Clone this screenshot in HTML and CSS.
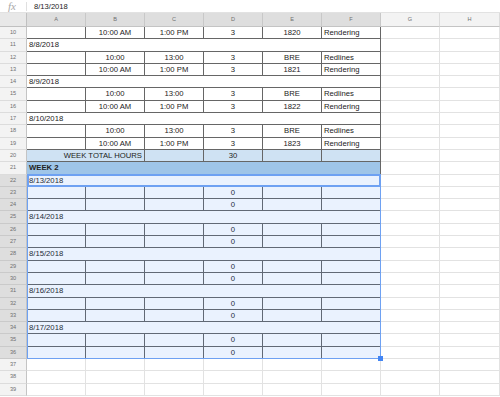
FILE: index.html
```html
<!DOCTYPE html>
<html>

<head>
  <meta charset="UTF-8">
  <title>Timesheet</title>
  <link rel="stylesheet" href="styles.css">
</head>

<body>
  <div id="formula-bar">
    <span class="fx">fx</span>
    <span class="formula">8/13/2018</span>
  </div>
  <div id="sheet">
    <div class="corner"></div>
    <div class="ch sel">A</div><div class="ch sel">B</div><div class="ch sel">C</div><div class="ch sel">D</div><div class="ch sel">E</div><div class="ch sel">F</div><div class="ch">G</div><div class="ch">H</div>

    <div class="rh">10</div><div class="d"></div><div class="d ct">10:00 AM</div><div class="d ct">1:00 PM</div><div class="d ct">3</div><div class="d ct">1820</div><div class="d">Rendering</div><div class="c"></div><div class="c"></div>
    <div class="rh">11</div><div class="d span6">8/8/2018</div><div class="c"></div><div class="c"></div>
    <div class="rh">12</div><div class="d"></div><div class="d ct">10:00</div><div class="d ct">13:00</div><div class="d ct">3</div><div class="d ct">BRE</div><div class="d">Redlines</div><div class="c"></div><div class="c"></div>
    <div class="rh">13</div><div class="d"></div><div class="d ct">10:00 AM</div><div class="d ct">1:00 PM</div><div class="d ct">3</div><div class="d ct">1821</div><div class="d">Rendering</div><div class="c"></div><div class="c"></div>
    <div class="rh">14</div><div class="d span6">8/9/2018</div><div class="c"></div><div class="c"></div>
    <div class="rh">15</div><div class="d"></div><div class="d ct">10:00</div><div class="d ct">13:00</div><div class="d ct">3</div><div class="d ct">BRE</div><div class="d">Redlines</div><div class="c"></div><div class="c"></div>
    <div class="rh">16</div><div class="d"></div><div class="d ct">10:00 AM</div><div class="d ct">1:00 PM</div><div class="d ct">3</div><div class="d ct">1822</div><div class="d">Rendering</div><div class="c"></div><div class="c"></div>
    <div class="rh">17</div><div class="d span6">8/10/2018</div><div class="c"></div><div class="c"></div>
    <div class="rh">18</div><div class="d"></div><div class="d ct">10:00</div><div class="d ct">13:00</div><div class="d ct">3</div><div class="d ct">BRE</div><div class="d">Redlines</div><div class="c"></div><div class="c"></div>
    <div class="rh">19</div><div class="d"></div><div class="d ct">10:00 AM</div><div class="d ct">1:00 PM</div><div class="d ct">3</div><div class="d ct">1823</div><div class="d">Rendering</div><div class="c"></div><div class="c"></div>
    <div class="rh">20</div><div class="d total span2 rt">WEEK TOTAL HOURS</div><div class="d total"></div><div class="d total ct">30</div><div class="d total"></div><div class="d total"></div><div class="c"></div><div class="c"></div>
    <div class="rh">21</div><div class="d week span6">WEEK 2</div><div class="c"></div><div class="c"></div>

    <div class="rh sel">22</div><div class="d span6">8/13/2018</div><div class="c"></div><div class="c"></div>
    <div class="rh sel">23</div><div class="d"></div><div class="d"></div><div class="d"></div><div class="d ct">0</div><div class="d"></div><div class="d"></div><div class="c"></div><div class="c"></div>
    <div class="rh sel">24</div><div class="d"></div><div class="d"></div><div class="d"></div><div class="d ct">0</div><div class="d"></div><div class="d"></div><div class="c"></div><div class="c"></div>
    <div class="rh sel">25</div><div class="d span6">8/14/2018</div><div class="c"></div><div class="c"></div>
    <div class="rh sel">26</div><div class="d"></div><div class="d"></div><div class="d"></div><div class="d ct">0</div><div class="d"></div><div class="d"></div><div class="c"></div><div class="c"></div>
    <div class="rh sel">27</div><div class="d"></div><div class="d"></div><div class="d"></div><div class="d ct">0</div><div class="d"></div><div class="d"></div><div class="c"></div><div class="c"></div>
    <div class="rh sel">28</div><div class="d span6">8/15/2018</div><div class="c"></div><div class="c"></div>
    <div class="rh sel">29</div><div class="d"></div><div class="d"></div><div class="d"></div><div class="d ct">0</div><div class="d"></div><div class="d"></div><div class="c"></div><div class="c"></div>
    <div class="rh sel">30</div><div class="d"></div><div class="d"></div><div class="d"></div><div class="d ct">0</div><div class="d"></div><div class="d"></div><div class="c"></div><div class="c"></div>
    <div class="rh sel">31</div><div class="d span6">8/16/2018</div><div class="c"></div><div class="c"></div>
    <div class="rh sel">32</div><div class="d"></div><div class="d"></div><div class="d"></div><div class="d ct">0</div><div class="d"></div><div class="d"></div><div class="c"></div><div class="c"></div>
    <div class="rh sel">33</div><div class="d"></div><div class="d"></div><div class="d"></div><div class="d ct">0</div><div class="d"></div><div class="d"></div><div class="c"></div><div class="c"></div>
    <div class="rh sel">34</div><div class="d span6">8/17/2018</div><div class="c"></div><div class="c"></div>
    <div class="rh sel">35</div><div class="d"></div><div class="d"></div><div class="d"></div><div class="d ct">0</div><div class="d"></div><div class="d"></div><div class="c"></div><div class="c"></div>
    <div class="rh sel">36</div><div class="d"></div><div class="d"></div><div class="d"></div><div class="d ct">0</div><div class="d"></div><div class="d"></div><div class="c"></div><div class="c"></div>

    <div class="rh">37</div><div class="c"></div><div class="c"></div><div class="c"></div><div class="c"></div><div class="c"></div><div class="c"></div><div class="c"></div><div class="c"></div>
    <div class="rh">38</div><div class="c"></div><div class="c"></div><div class="c"></div><div class="c"></div><div class="c"></div><div class="c"></div><div class="c"></div><div class="c"></div>
    <div class="rh">39</div><div class="c"></div><div class="c"></div><div class="c"></div><div class="c"></div><div class="c"></div><div class="c"></div><div class="c"></div><div class="c"></div>

    <!-- selected range A22:F36 and the active cell -->
    <div class="selection"><span class="handle"></span></div>
    <div class="active-cell"></div>
  </div>
</body>

</html>
```
FILE: styles.css
```css
* {
  box-sizing: border-box;
}

body {
  margin: 0;
  width: 500px;
  height: 397px;
  overflow: hidden;
  background-color: #ffffff;
  font-family: "Liberation Sans", Arial, sans-serif;
  color: #222222;
}

#formula-bar {
  height: 13px;
  display: flex;
  align-items: center;
  border-bottom: 1px solid #e2e2e2;
}

.fx {
  width: 26px;
  padding-left: 8px;
  font-family: "Liberation Serif", serif;
  font-style: italic;
  font-size: 11px;
  line-height: 11px;
  color: #a8a8a8;
}

.formula {
  height: 9px;
  padding-left: 7px;
  border-left: 1px solid #e0e0e0;
  font-size: 7.6px;
  line-height: 9px;
}

#sheet {
  position: relative;
  display: grid;
  grid-template-columns: 27px repeat(7, 59px) 1fr;
  grid-template-rows: 14px;
  grid-auto-rows: 12.31px;
}

.corner {
  background-color: #e8e8e8;
  border-right: 1px solid #c0c0c0;
  border-bottom: 1px solid #c0c0c0;
}

.ch {
  background-color: #f3f3f3;
  border-right: 1px solid #dcdcdc;
  border-bottom: 1px solid #c4c4c4;
  font-size: 5.6px;
  line-height: 13px;
  text-align: center;
  color: #6f6f6f;
}

.ch.sel {
  background-color: #dedede;
  border-right-color: #c8c8c8;
}

.rh {
  background-color: #f3f3f3;
  border-right: 1px solid #c4c4c4;
  border-bottom: 1px solid #dcdcdc;
  font-size: 5.6px;
  line-height: 11.3px;
  text-align: center;
  color: #6f6f6f;
}

.rh.sel {
  background-color: #dedede;
  border-bottom-color: #cacaca;
}

.c,
.d {
  padding: 0 2px;
  font-size: 7.7px;
  line-height: 11.3px;
  white-space: nowrap;
  overflow: hidden;
}

.c {
  border-right: 1px solid #e2e2e2;
  border-bottom: 1px solid #e2e2e2;
}

.d {
  border-right: 1px solid #666666;
  border-bottom: 1px solid #666666;
}

.ct {
  text-align: center;
}

.rt {
  text-align: right;
}

.span2 {
  grid-column: span 2;
}

.span6 {
  grid-column: span 6;
}

.total {
  background-color: #cfe2f3;
}

.week {
  background-color: #9fc5e8;
  font-weight: bold;
}

.selection {
  position: absolute;
  inset: 0;
  grid-row: 14 / 29;
  grid-column: 2 / 8;
  background-color: rgba(66, 133, 244, 0.11);
  border: 1px solid #6ea1f2;
}

.handle {
  position: absolute;
  right: -3px;
  bottom: -3px;
  width: 5px;
  height: 5px;
  background-color: #4285f4;
}

.active-cell {
  position: absolute;
  inset: -1px 0 0 0;
  grid-row: 14 / 15;
  grid-column: 2 / 8;
  border: 2px solid #6ea1f2;
}
```
